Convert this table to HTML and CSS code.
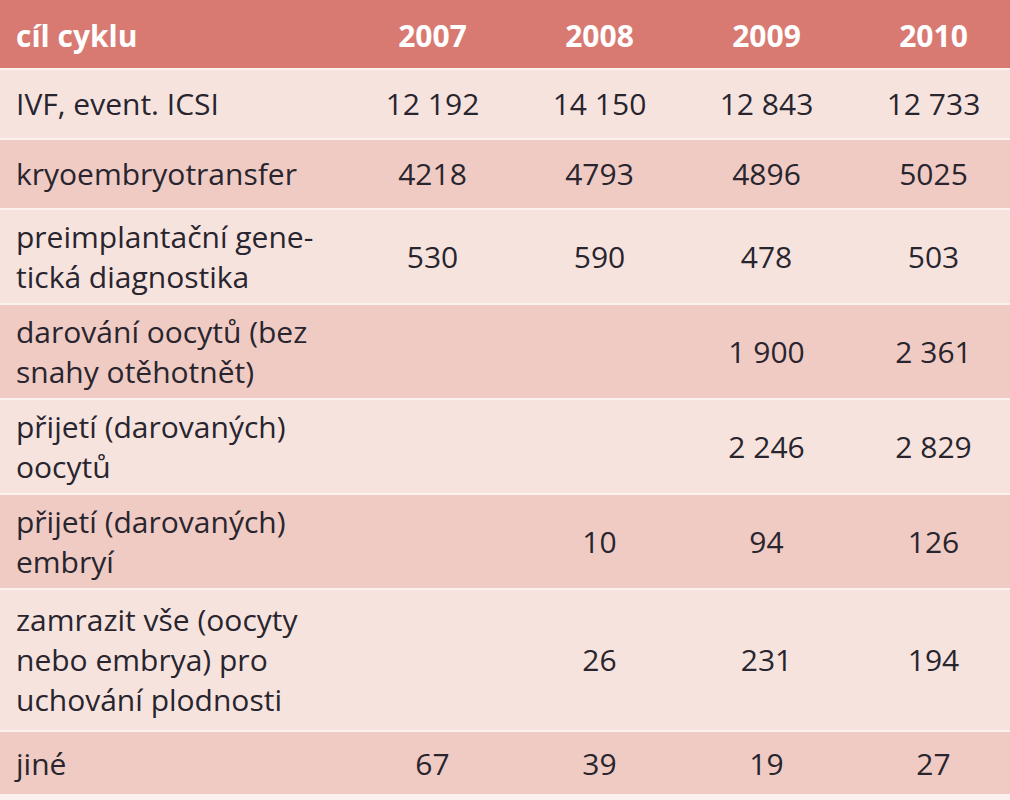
FILE: index.html
```html
<!DOCTYPE html>
<html lang="cs">
<head>
<meta charset="utf-8">
<title>Cíl cyklu</title>
<link rel="stylesheet" href="styles.css">
</head>
<body>
<table class="data">
  <colgroup>
    <col class="c-label">
    <col class="c-num"><col class="c-num"><col class="c-num"><col class="c-num">
  </colgroup>
  <thead>
    <tr class="head">
      <th class="lbl">cíl cyklu</th><th>2007</th><th>2008</th><th>2009</th><th>2010</th>
    </tr>
  </thead>
  <tbody>
    <tr class="light"><td class="lbl">IVF, event. ICSI</td><td>12 192</td><td>14 150</td><td>12 843</td><td>12 733</td></tr>
    <tr class="dark"><td class="lbl">kryoembryotransfer</td><td>4218</td><td>4793</td><td>4896</td><td>5025</td></tr>
    <tr class="light"><td class="lbl">preimplantační gene-<br>tická diagnostika</td><td>530</td><td>590</td><td>478</td><td>503</td></tr>
    <tr class="dark"><td class="lbl">darování oocytů (bez<br>snahy otěhotnět)</td><td></td><td></td><td>1 900</td><td>2 361</td></tr>
    <tr class="light"><td class="lbl">přijetí (darovaných)<br>oocytů</td><td></td><td></td><td>2 246</td><td>2 829</td></tr>
    <tr class="dark"><td class="lbl">přijetí (darovaných)<br>embryí</td><td></td><td>10</td><td>94</td><td>126</td></tr>
    <tr class="light tall"><td class="lbl">zamrazit vše (oocyty<br>nebo embrya) pro<br>uchování plodnosti</td><td></td><td>26</td><td>231</td><td>194</td></tr>
    <tr class="dark last"><td class="lbl">jiné</td><td>67</td><td>39</td><td>19</td><td>27</td></tr>
  </tbody>
</table>
</body>
</html>
```

FILE: styles.css
```css
html, body {
  margin: 0;
  padding: 0;
  background: #fbf1ee;
  overflow: hidden;
}

.data {
  width: 1017px;
  border-collapse: collapse;
  table-layout: fixed;
  font-family: "Open Sans", "Noto Sans", sans-serif;
  font-size: 30px;
  line-height: 40px;
  color: #28252e;
}

.c-label { width: 349px; }
.c-num { width: 167px; }

.data th,
.data td {
  padding: 6.5px 0;
  text-align: center;
  vertical-align: middle;
  border-top: 2px solid #fbf1ee;
}

.data .lbl {
  text-align: left;
  padding-left: 16px;
}

.head th {
  background: #d87a72;
  color: #ffffff;
  font-weight: 700;
  height: 54px;
  border-top: 0;
  padding-top: 9px;
  padding-bottom: 5px;
}

.light td { background: #f7e3de; height: 55px; }
.dark td { background: #f0cbc4; height: 55px; }

.tall td {
  padding-top: 10px;
  padding-bottom: 10px;
}

.last td {
  height: 50px;
  padding-top: 7px;
  padding-bottom: 5px;
}
```
